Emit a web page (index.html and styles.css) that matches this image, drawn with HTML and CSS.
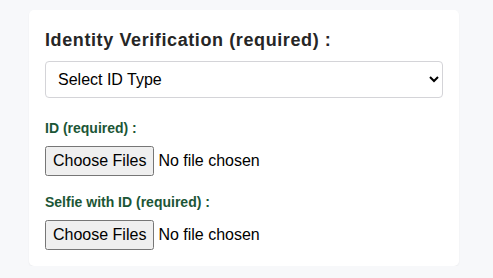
FILE: index.html
```html
<!DOCTYPE html>
<html>
<head>
<meta charset="utf-8">
<link rel="stylesheet" href="styles.css">
</head>
<body>
<div class="card">
  <h3 class="title">Identity Verification (required) :</h3>
  <select class="id-select">
    <option>Select ID Type</option>
  </select>
  <div class="field field-first">
    <label class="field-label">ID (required) :</label>
    <input type="file" multiple class="file-input">
  </div>
  <div class="field">
    <label class="field-label">Selfie with ID (required) :</label>
    <input type="file" multiple class="file-input">
  </div>
</div>
</body>
</html>
```
FILE: styles.css
```css
html, body {
  margin: 0;
  background: #f7f8fa;
}
body {
  padding: 10px 0 0 29px;
  font-family: "Liberation Sans", Arial, sans-serif;
}
.card {
  width: 398px;
  background: #fff;
  border-radius: 5px;
  box-shadow: 0 1px 2px rgba(0,0,0,0.05);
  padding: 18px 16px 16px 16px;
}
.title {
  margin: 0 0 9px 0;
  font-size: 18px;
  font-weight: bold;
  color: #262626;
  letter-spacing: 0.6px;
  line-height: 24px;
}
.id-select {
  display: block;
  width: 100%;
  height: 37px;
  padding: 0 10px 0 8px;
  font-family: "Liberation Sans", Arial, sans-serif;
  font-size: 16px;
  color: #000;
  background: #fff;
  border: 1px solid #d4d4d8;
  border-radius: 4px;
}
.field {
  margin-top: 18px;
}
.field-first {
  margin-top: 22px;
}
.field-label {
  display: block;
  font-size: 14px;
  line-height: 16px;
  font-weight: bold;
  color: #1c5636;
  margin-bottom: 10px;
}
.file-input {
  display: block;
  font-family: "Liberation Sans", Arial, sans-serif;
  font-size: 16px;
}
.file-input::file-selector-button {
  padding: 4px 6px;
  font-family: "Liberation Sans", Arial, sans-serif;
  font-size: 16px;
}
```
